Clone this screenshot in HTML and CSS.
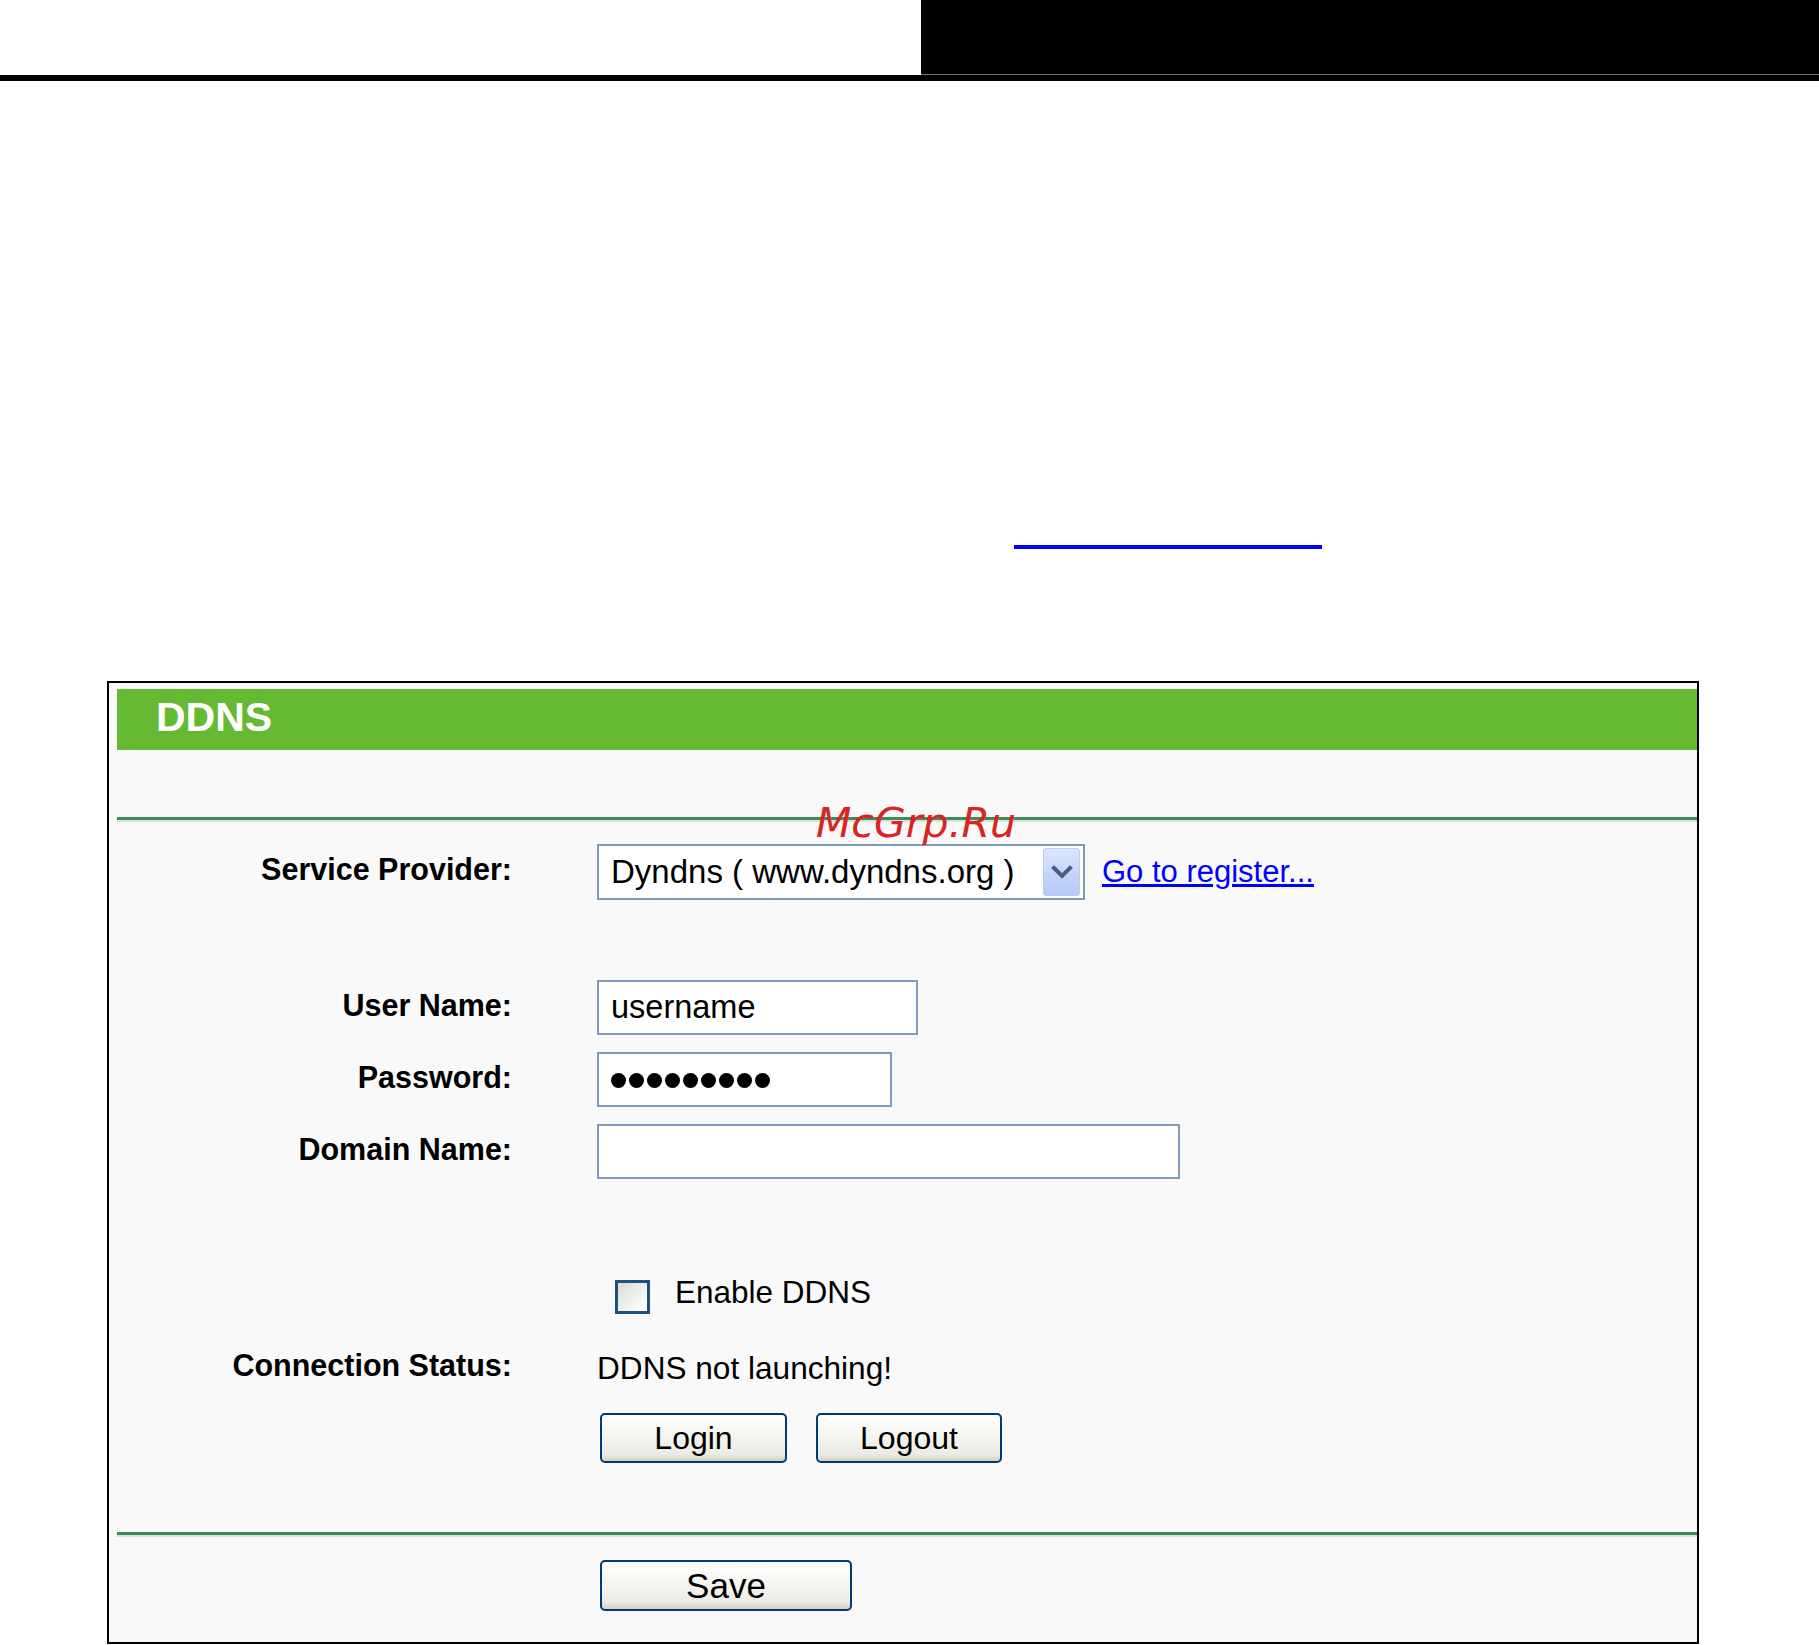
FILE: index.html
```html
<!DOCTYPE html>
<html>
<head>
<meta charset="utf-8">
<title>DDNS</title>
<link rel="stylesheet" href="styles.css">
</head>
<body>
<div class="topbar">
  <div class="top-left"></div>
  <div class="top-right"></div>
</div>
<div class="top-rule"></div>
<div class="blue-rule"></div>

<div class="panel">
  <div class="panel-inner">
    <div class="panel-head">DDNS</div>
    <div class="sep sep-first"></div>

    <div class="row row-provider">
      <div class="label">Service Provider:</div>
      <div class="field">
        <div class="select">
          <span class="select-text">Dyndns ( www.dyndns.org )</span>
          <span class="select-btn">
            <svg width="22" height="14" viewBox="0 0 22 14"><path d="M3 3 L11 11 L19 3" fill="none" stroke="#4a5d82" stroke-width="4" stroke-linecap="square"/></svg>
          </span>
        </div>
        <a class="register" href="#">Go to register...</a>
      </div>
    </div>

    <div class="row row-user">
      <div class="label">User Name:</div>
      <div class="field"><div class="input input-user">username</div></div>
    </div>

    <div class="row row-pass">
      <div class="label">Password:</div>
      <div class="field">
        <div class="input input-pass">
          <span class="dot"></span><span class="dot"></span><span class="dot"></span><span class="dot"></span><span class="dot"></span><span class="dot"></span><span class="dot"></span><span class="dot"></span><span class="dot"></span>
        </div>
      </div>
    </div>

    <div class="row row-domain">
      <div class="label">Domain Name:</div>
      <div class="field"><div class="input input-domain"></div></div>
    </div>

    <div class="row row-check">
      <div class="label"></div>
      <div class="field">
        <span class="checkbox"></span>
        <span class="check-text">Enable DDNS</span>
      </div>
    </div>

    <div class="row row-status">
      <div class="label">Connection Status:</div>
      <div class="field"><span class="value">DDNS not launching!</span></div>
    </div>

    <div class="row row-buttons">
      <div class="label"></div>
      <div class="field buttons">
        <button class="btn btn-login">Login</button>
        <button class="btn btn-logout">Logout</button>
      </div>
    </div>

    <div class="sep sep-second"></div>

    <div class="row row-save">
      <div class="label"></div>
      <div class="field buttons">
        <button class="btn btn-save">Save</button>
      </div>
    </div>
  </div>
</div>

<div class="watermark">McGrp.Ru</div>
</body>
</html>
```

FILE: styles.css
```css
html, body {
  margin: 0;
  padding: 0;
  background: #ffffff;
}

body {
  width: 1819px;
  height: 1645px;
  position: relative;
  overflow: hidden;
  font-family: "Liberation Sans", Arial, sans-serif;
  color: #000;
}

.topbar {
  display: flex;
  height: 75px;
}

.top-left {
  flex: 0 0 921px;
  background: #ffffff;
}

.top-right {
  flex: 1 1 auto;
  background: #000000;
  border-bottom: 1px solid #6e6e6e;
  box-sizing: border-box;
}

.top-rule {
  height: 6px;
  background: #000000;
}

.blue-rule {
  margin-top: 464px;
  margin-left: 1014px;
  width: 308px;
  height: 4px;
  background: #0000ff;
}

.panel {
  margin-top: 132px;
  margin-left: 107px;
  width: 1592px;
  height: 963px;
  box-sizing: border-box;
  border: 2px solid #000000;
  background: #f9f9f9;
}

.panel-inner {
  padding: 6px 0 0 8px;
}

.panel-head {
  height: 61px;
  line-height: 57px;
  background: #66b933;
  color: #ffffff;
  font-weight: bold;
  font-size: 41px;
  padding-left: 39px;
}

.sep {
  height: 3px;
  background: #3d8a5b;
  border-bottom: 2px solid #d3e6da;
}

.sep-first {
  margin-top: 67px;
}

.row {
  display: grid;
  grid-template-columns: 395px auto;
  column-gap: 85px;
  align-items: center;
}

.label {
  text-align: right;
  font-weight: bold;
  font-size: 30.5px;
  line-height: 36px;
  padding-bottom: 6px;
}

.field {
  display: flex;
  align-items: center;
}

.row-provider {
  margin-top: 22px;
  height: 56px;
}

.select {
  width: 488px;
  height: 56px;
  box-sizing: border-box;
  border: 2px solid #7f9db9;
  background: #ffffff;
  display: flex;
  align-items: center;
  justify-content: space-between;
  padding: 0 3px 0 12px;
}

.select-text {
  font-size: 33px;
  line-height: 40px;
  white-space: nowrap;
}

.select-btn {
  width: 37px;
  height: 48px;
  box-sizing: border-box;
  border: 1px solid #b8cbf6;
  border-radius: 3px;
  background: linear-gradient(to bottom, #dde7fd 0%, #c6d6fb 50%, #b5c8f6 100%);
  display: flex;
  align-items: center;
  justify-content: center;
}

.register {
  margin-left: 17px;
  font-size: 31px;
  line-height: 40px;
  color: #0000ff;
  text-decoration: underline;
}

.input {
  height: 55px;
  box-sizing: border-box;
  border: 2px solid #7f9db9;
  background: #ffffff;
  padding-left: 12px;
  font-size: 32.5px;
  line-height: 51px;
  display: flex;
  align-items: center;
}

.row-user {
  margin-top: 80px;
}

.input-user {
  width: 321px;
}

.row-pass {
  margin-top: 17px;
}

.input-pass {
  width: 295px;
  gap: 3px;
  padding-top: 2px;
}

.dot {
  display: inline-block;
  width: 15px;
  height: 15px;
  border-radius: 50%;
  background: #000000;
}

.row-domain {
  margin-top: 17px;
}

.input-domain {
  width: 583px;
}

.row-check {
  margin-top: 101px;
  height: 34px;
}

.checkbox {
  display: inline-block;
  margin-left: 18px;
  width: 35px;
  height: 34px;
  box-sizing: border-box;
  border: 3px solid #1c5180;
  background: linear-gradient(135deg, #dcdcd6 0%, #f2f2ee 60%, #ffffff 100%);
}

.check-text {
  margin-left: 25px;
  font-size: 31.5px;
  line-height: 34px;
  position: relative;
  top: -5px;
}

.row-status {
  margin-top: 33px;
  height: 40px;
}

.value {
  font-size: 31.6px;
  line-height: 40px;
}

.row-buttons {
  margin-top: 26px;
}

.buttons {
  gap: 29px;
  padding-left: 3px;
}

.btn {
  height: 50px;
  box-sizing: border-box;
  border: 2px solid #003c74;
  border-radius: 5px;
  background: linear-gradient(to bottom, #ffffff 0%, #f6f6f2 40%, #ecebe5 85%, #d6d0c5 100%);
  font-family: "Liberation Sans", Arial, sans-serif;
  font-size: 32px;
  color: #000000;
  padding: 0;
  line-height: 44px;
}

.btn-login {
  width: 187px;
}

.btn-logout {
  width: 186px;
}

.sep-second {
  margin-top: 69px;
}

.row-save {
  margin-top: 23px;
}

.btn-save {
  width: 252px;
  height: 51px;
  font-size: 35px;
}

.watermark {
  position: absolute;
  left: 816px;
  top: 803px;
  font-family: "DejaVu Sans", sans-serif;
  font-style: italic;
  font-size: 41px;
  line-height: 40px;
  color: #d92424;
  white-space: nowrap;
}
```
